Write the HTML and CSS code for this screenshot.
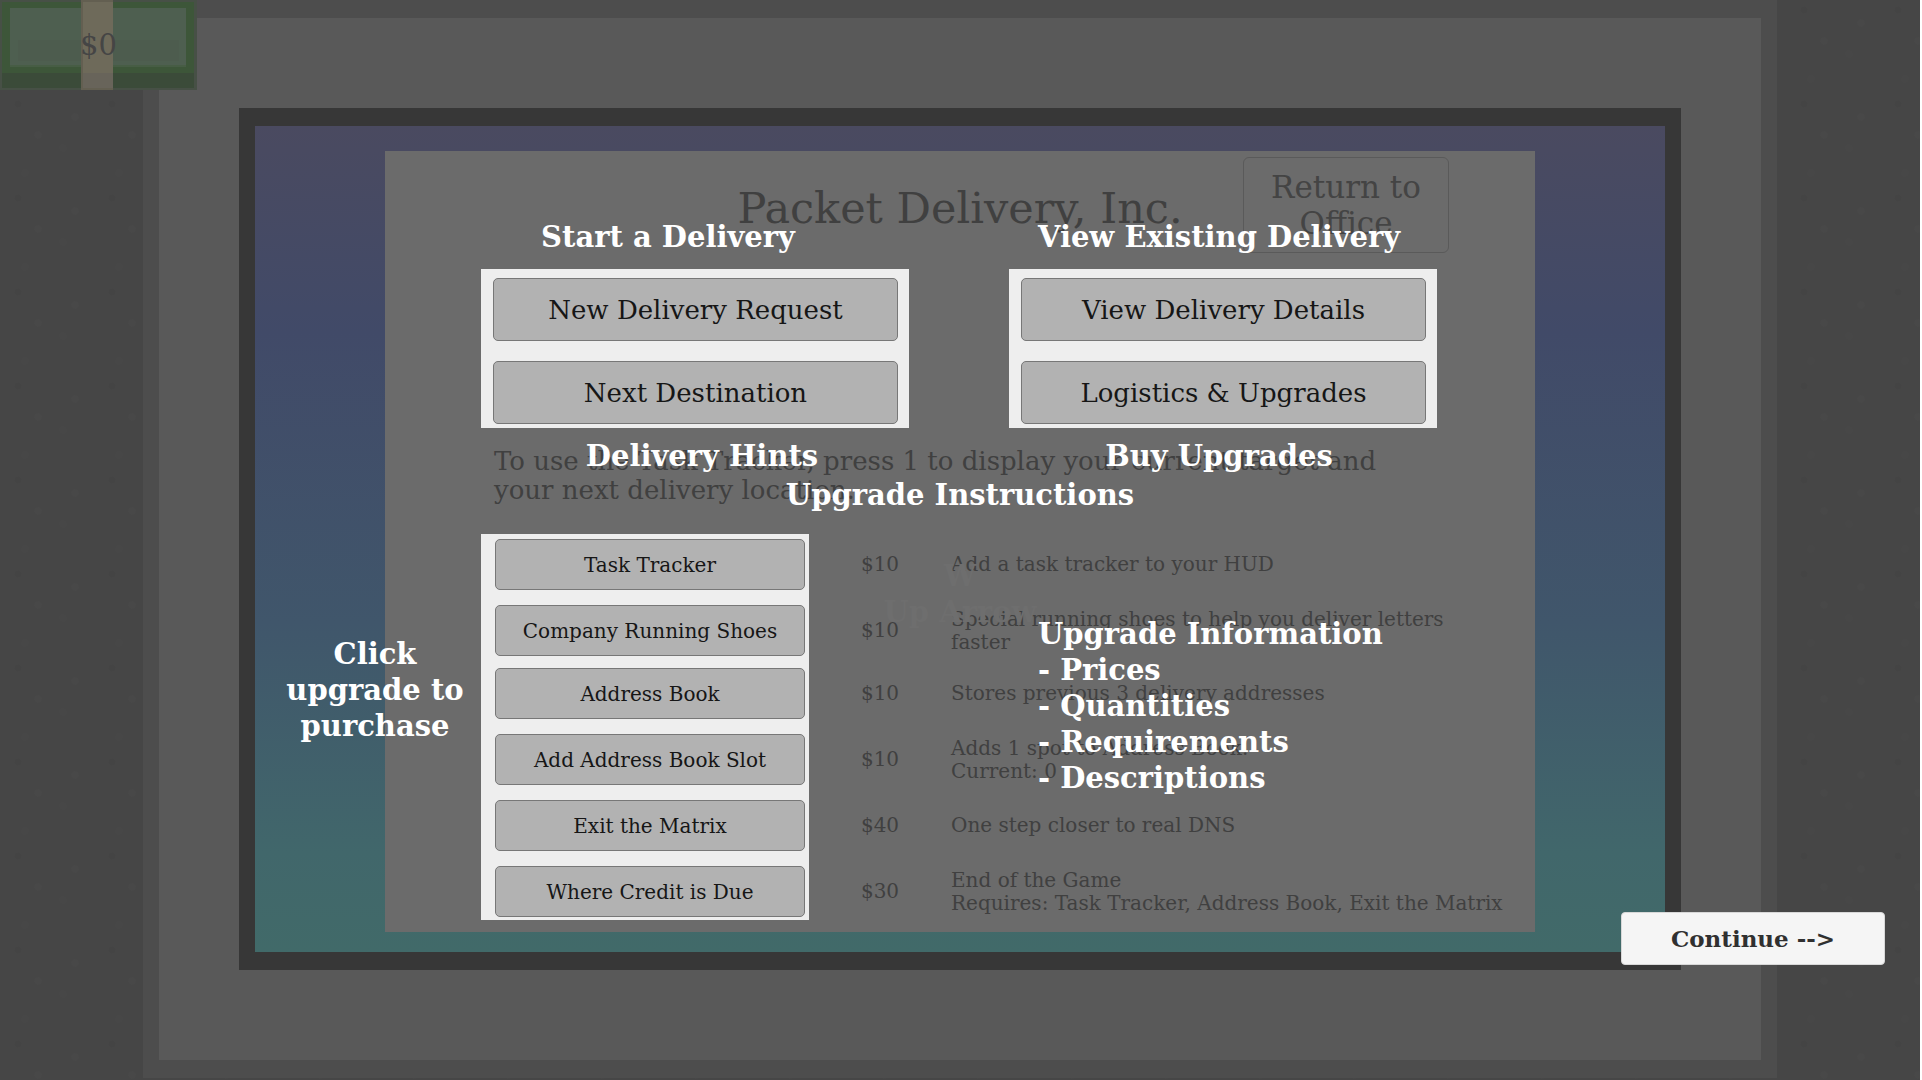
FILE: index.html
```html
<!DOCTYPE html>
<html lang="en">
<head>
<meta charset="utf-8">
<title>Packet Delivery, Inc.</title>
<link rel="stylesheet" href="styles.css">
</head>
<body>
<div class="wall">
  <div class="desk">
    <div class="monitor">
      <main class="panel">
        <header class="header">
          <h1 class="title">Packet Delivery, Inc.</h1>
          <button class="return" type="button">Return to Office</button>
        </header>

        <div class="groups">
          <section class="group">
            <button class="btn btn-large" type="button">New Delivery Request</button>
            <button class="btn btn-large" type="button">Next Destination</button>
          </section>
          <section class="group">
            <button class="btn btn-large" type="button">View Delivery Details</button>
            <button class="btn btn-large" type="button">Logistics &amp; Upgrades</button>
          </section>
        </div>

        <p class="hint">To use the Task Tracker, press 1 to display your current target and<br>your next delivery location.</p>

        <table class="upgrades">
          <tbody>
            <tr><td class="buy"><button class="btn" type="button">Task Tracker</button></td><td class="price">$10</td><td class="about">Add a task tracker to your HUD</td></tr>
            <tr class="tight"><td class="buy"><button class="btn" type="button">Company Running Shoes</button></td><td class="price">$10</td><td class="about">Special running shoes to help you deliver letters<br>faster</td></tr>
            <tr><td class="buy"><button class="btn" type="button">Address Book</button></td><td class="price">$10</td><td class="about">Stores previous 3 delivery addresses</td></tr>
            <tr><td class="buy"><button class="btn" type="button">Add Address Book Slot</button></td><td class="price">$10</td><td class="about">Adds 1 spot to Address Book.<br>Current: 0</td></tr>
            <tr><td class="buy"><button class="btn" type="button">Exit the Matrix</button></td><td class="price">$40</td><td class="about">One step closer to real DNS</td></tr>
            <tr><td class="buy"><button class="btn" type="button">Where Credit is Due</button></td><td class="price">$30</td><td class="about">End of the Game<br>Requires: Task Tracker, Address Book, Exit the Matrix</td></tr>
          </tbody>
        </table>

        <div class="keys">W<br>Up Arrow</div>

        <div class="tip tip-start">Start a Delivery</div>
        <div class="tip tip-view">View Existing Delivery</div>
        <div class="tip tip-hints">Delivery Hints</div>
        <div class="tip tip-buy">Buy Upgrades</div>
        <div class="tip tip-instructions">Upgrade Instructions</div>
        <div class="tip tip-click">Click<br>upgrade to<br>purchase</div>
        <div class="tip tip-info">Upgrade Information<br>- Prices<br>- Quantities<br>- Requirements<br>- Descriptions</div>
      </main>
    </div>
  </div>

  <div class="money">
    <svg class="bill" viewBox="0 0 197 90" aria-hidden="true">
      <rect width="197" height="90" fill="#475046"/>
      <rect x="2" y="2" width="192" height="86" fill="#3b4b39"/>
      <rect x="2" y="2" width="192" height="71" fill="#3d5639"/>
      <rect x="10" y="8" width="176" height="59" fill="#52635280"/>
      <rect x="10" y="8" width="176" height="57" fill="#4e5f50"/>
      <rect x="18" y="40" width="161" height="21" fill="#4d5c4e"/>
      <rect x="81" width="32" height="90" fill="#635f51"/>
      <rect x="83" y="2" width="30" height="86" fill="#6e6a5a"/>
      <rect x="83" y="73" width="30" height="15" fill="#68645a"/>
    </svg>
    <span class="amount">$0</span>
  </div>

  <button class="continue" type="button">Continue --&gt;</button>
</div>
</body>
</html>
```
FILE: styles.css
```css
* {
  box-sizing: border-box;
}

body {
  margin: 0;
  padding-right: 2px;
  background: #fff;
  font-family: "DejaVu Serif", serif;
}

button {
  font-family: inherit;
}

.wall {
  position: relative;
  min-height: 100vh;
  padding: 0 143px 2px;
  background-color: #464646;
  background-image:
    radial-gradient(circle at 75px 23px, #484848 3px, transparent 4px),
    radial-gradient(circle at 38px 41px, #484848 3px, transparent 4px),
    radial-gradient(circle at 63px 54px, #474747 3px, transparent 4px),
    radial-gradient(circle at 25px 79px, #474747 3px, transparent 4px),
    radial-gradient(circle at 18px 10px, #444 3px, transparent 4px);
  background-size: 94px 94px;
}

/* Desk and monitor */

.desk {
  padding: 90px 80px;
  border: solid #4d4d4d;
  border-width: 18px 16px;
  background: #595959;
}

.monitor {
  padding: 25px 130px 20px;
  border: solid #373737;
  border-width: 18px 16px;
  background: linear-gradient(#4a4a60, #414a68 25%, #40566b 60%, #41676b 88%, #416a69);
}

.panel {
  position: relative;
  padding: 6px 0 12px;
  background: #6b6b6b;
  color: #404040;
}

.header {
  display: grid;
  grid-template-columns: 1fr auto 1fr;
  align-items: center;
  padding: 0 86px;
}

.title {
  grid-column: 2;
  margin: 0;
  padding-top: 6px;
  font-size: 43px;
  font-weight: 400;
  line-height: 48px;
}

.return {
  justify-self: end;
  width: 206px;
  height: 96px;
  padding: 0 16px;
  border: 1px solid #5a5a5a;
  border-radius: 6px;
  background: transparent;
  color: #444;
  font-size: 31px;
  line-height: 36px;
}

/* Menu */

.groups {
  display: flex;
  gap: 100px;
  margin: 16px 98px 0 96px;
}

.group {
  display: flex;
  flex: 1;
  flex-direction: column;
  gap: 20px;
  padding: 9px 11px 4px 12px;
  background: #eee;
}

.btn {
  display: block;
  width: 100%;
  height: 51px;
  padding: 0;
  border: 1px solid #777;
  border-radius: 5px;
  background: #b2b2b2;
  color: #161616;
  font-size: 20px;
}

.btn-large {
  height: 63px;
  font-size: 26px;
}

.hint {
  margin: 19px 0 29px 109px;
  font-size: 26px;
  line-height: 29px;
  white-space: nowrap;
}

/* Upgrades */

.upgrades {
  width: calc(100% - 96px);
  margin-left: 96px;
  border-collapse: collapse;
  table-layout: fixed;
  font-size: 20px;
  line-height: 23px;
}

.upgrades td {
  padding: 5px 0 10px;
}

.upgrades .tight td {
  padding-bottom: 7px;
}

.upgrades tr:last-child td {
  padding-bottom: 3px;
}

.upgrades .buy {
  width: 328px;
  padding-right: 4px;
  padding-left: 14px;
  background: #eee;
}

.price {
  width: 142px;
  text-align: center;
}

.about {
  white-space: nowrap;
}

/* Tutorial captions over the panel */

.tip,
.keys {
  position: absolute;
  color: #fff;
  font-size: 29px;
  font-weight: 700;
  line-height: 36px;
  text-align: center;
  white-space: nowrap;
  transform: translateX(-50%);
}

.keys {
  top: 407px;
  left: 50%;
  color: #6e6e6e;
}

.tip-start {
  top: 68px;
  left: 283px;
}

.tip-view {
  top: 68px;
  left: 834px;
}

.tip-hints {
  top: 287px;
  left: 317px;
}

.tip-buy {
  top: 287px;
  left: 834px;
}

.tip-instructions {
  top: 326px;
  left: 50%;
}

.tip-click {
  top: 485px;
  left: -10px;
}

.tip-info {
  top: 465px;
  left: 653px;
  text-align: left;
  transform: none;
}

/* Money counter and continue button */

.money {
  position: absolute;
  top: 0;
  left: 0;
  display: grid;
  place-items: center;
  width: 197px;
  height: 90px;
}

.bill,
.amount {
  grid-area: 1 / 1;
}

.amount {
  color: #454545;
  font-size: 29px;
}

.continue {
  position: absolute;
  right: 35px;
  bottom: 115px;
  width: 264px;
  height: 53px;
  border: 1px solid #d8d8d8;
  border-radius: 4px;
  background: #f5f5f5;
  color: #303030;
  font-size: 23px;
  font-weight: 700;
}
```
